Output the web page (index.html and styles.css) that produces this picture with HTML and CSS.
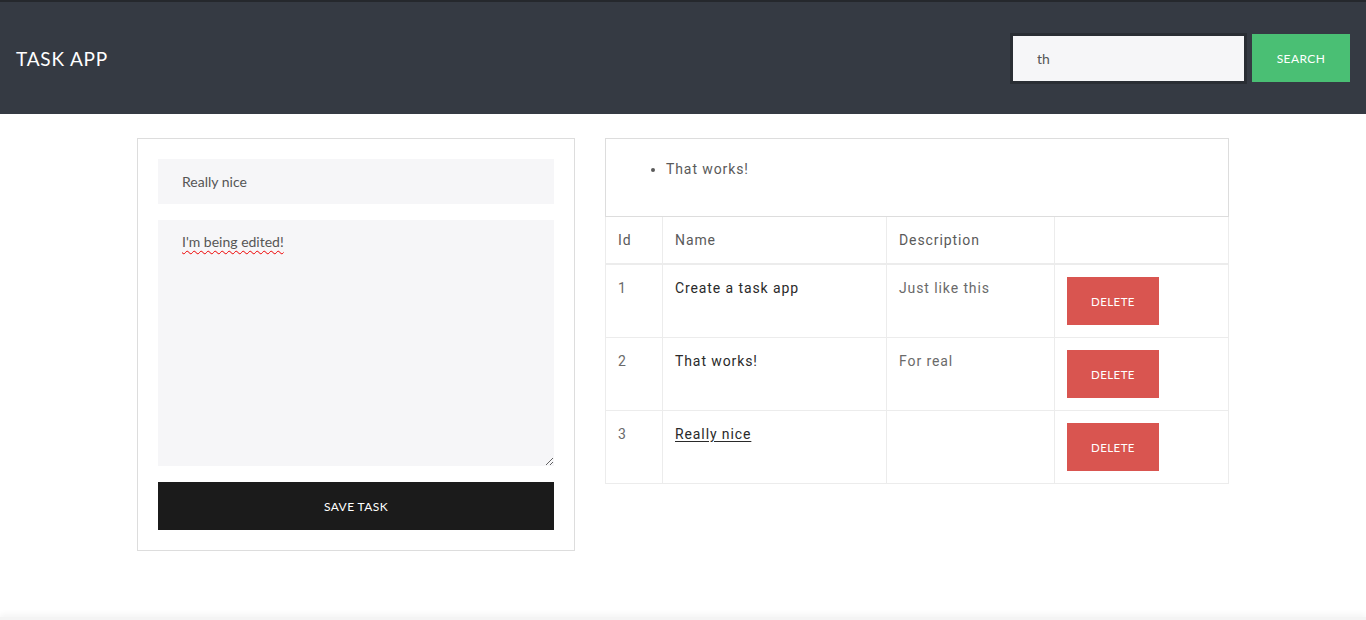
FILE: index.html
```html
<!DOCTYPE html>
<html lang="en">
<head>
<meta charset="utf-8">
<title>Task App</title>
<link rel="stylesheet" href="styles.css">
</head>
<body>
<header class="topbar">
  <div class="brand">TASK APP</div>
  <form class="search">
    <input class="search-input" type="text" value="th">
    <button class="btn btn-green" type="button">Search</button>
  </form>
</header>
<main class="container">
  <section class="card">
    <input class="field" type="text" value="Really nice">
    <textarea class="field area">I'm being edited!</textarea>
    <button class="btn btn-dark btn-block" type="button">Save Task</button>
  </section>
  <section class="results">
    <div class="found">
      <ul class="found-list">
        <li>That works!</li>
      </ul>
    </div>
    <table class="tasks">
      <colgroup>
        <col class="c-id"><col class="c-name"><col class="c-desc"><col class="c-act">
      </colgroup>
      <thead>
        <tr><th>Id</th><th>Name</th><th>Description</th><th></th></tr>
      </thead>
      <tbody>
        <tr><td class="muted">1</td><td class="name">Create a task app</td><td class="muted">Just like this</td><td><button class="btn btn-red" type="button">Delete</button></td></tr>
        <tr><td class="muted">2</td><td class="name">That works!</td><td class="muted">For real</td><td><button class="btn btn-red" type="button">Delete</button></td></tr>
        <tr><td class="muted">3</td><td class="name"><span class="hovered">Really nice</span></td><td class="muted"></td><td><button class="btn btn-red" type="button">Delete</button></td></tr>
      </tbody>
    </table>
  </section>
</main>
<footer class="footer"></footer>
</body>
</html>
```
FILE: styles.css
```css
* { box-sizing: border-box; }
html, body { margin: 0; padding: 0; }
body {
  font-family: "Lato", "Open Sans", sans-serif;
  background: #fff;
  color: #333;
  height: 620px;
  overflow: hidden;
}
.topbar {
  height: 114px;
  background: #353a43;
  border-top: 2px solid #25282d;
  display: flex;
  align-items: center;
  justify-content: space-between;
  padding: 0 16px;
}
.brand {
  color: #fff;
  font-size: 19px;
  letter-spacing: 0.8px;
  font-family: "Lato", sans-serif;
}
.search { display: flex; align-items: center; gap: 8px; }
.search-input {
  width: 231px;
  height: 45px;
  border: none;
  outline: 3px solid #2a2e34;
  background: #f6f6f8;
  padding: 0 24px;
  font: 14px "Lato", sans-serif;
  color: #555;
}
.btn {
  border: none;
  font-family: "Lato", sans-serif;
  text-transform: uppercase;
  color: #fff;
  cursor: pointer;
  letter-spacing: 0.4px;
}
.btn-green {
  width: 98px;
  height: 48px;
  background: #4abf74;
  font-size: 12px;
}
.container {
  width: 1092px;
  margin: 24px auto 0;
  display: flex;
  align-items: flex-start;
  gap: 30px;
}
.card {
  width: 438px;
  border: 1px solid #ddd;
  padding: 20px;
  display: flex;
  flex-direction: column;
  gap: 16px;
}
.field {
  display: block;
  width: 100%;
  border: none;
  background: #f6f6f8;
  font: 14px "Lato", sans-serif;
  color: #555;
  padding: 0 24px;
  outline: none;
}
input.field { height: 45px; }
.area {
  height: 246px;
  padding: 13px 24px;
  resize: vertical;
  line-height: 18px;
  text-decoration: underline wavy #e00;
  text-underline-offset: 3px;
  text-decoration-thickness: 1px;
}
.btn-dark {
  background: #1b1b1b;
  height: 48px;
  font-size: 12px;
}
.btn-block { width: 100%; }
.results { width: 624px; }
.found {
  border: 1px solid #ddd;
  padding: 20px 0 37px;
}
.found-list {
  margin: 0;
  padding-left: 60px;
  font: 14px "Roboto", sans-serif;
  letter-spacing: 0.9px;
  color: #5a5a5a;
  line-height: 20px;
}
.tasks {
  width: 623px;
  border-collapse: collapse;
  table-layout: fixed;
  font: 14px "Roboto", sans-serif;
  letter-spacing: 0.9px;
}
.c-id { width: 57px; }
.c-name { width: 224px; }
.c-desc { width: 168px; }
.c-act { width: 174px; }
.tasks th, .tasks td {
  border: 1px solid #ececec;
  padding: 12px 12px;
  text-align: left;
  vertical-align: top;
  line-height: 22px;
}
.tasks th {
  font-weight: 400;
  color: #5a5a5a;
  border-bottom: 2px solid #ececec;
  border-top: none;
}
.tasks td { height: 73px; }
.tasks .muted { color: #6a6a6a; }
.tasks .name { color: #2a2a2a; }
.hovered { text-decoration: underline; text-underline-offset: 2px; }
.btn-red {
  width: 92px;
  height: 48px;
  background: #d95550;
  font-size: 11.5px;
}
.footer {
  margin-top: 66px;
  height: 6px;
  background: #f4f4f4;
  box-shadow: 0 -2px 6px rgba(0, 0, 0, 0.06);
}
```
